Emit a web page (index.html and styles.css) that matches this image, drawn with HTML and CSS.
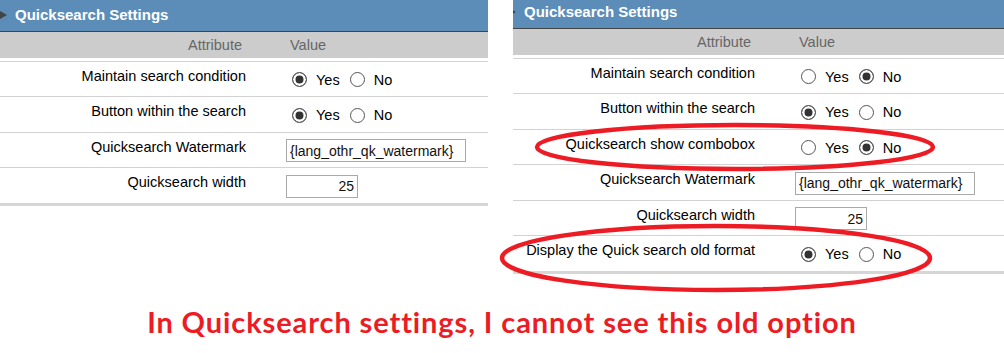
FILE: index.html
```html
<!DOCTYPE html>
<html lang="en">
<head>
    <meta charset="UTF-8">
    <title>Quicksearch Settings</title>
    <link rel="stylesheet" href="styles.css">
</head>
<body>
    <div class="panels">

        <div class="panel panel-left">
            <div class="sheet">
                <div class="title"><span class="arrow"></span>Quicksearch Settings</div>
                <div class="colhead">
                    <div class="attr">Attribute</div>
                    <div class="val">Value</div>
                </div>
                <div class="rows">
                    <div class="row">
                        <label class="attr">Maintain search condition</label>
                        <div class="val">
                            <input type="radio" name="l1" checked><span>Yes</span>
                            <input type="radio" name="l1"><span>No</span>
                        </div>
                    </div>
                    <div class="row">
                        <label class="attr">Button within the search</label>
                        <div class="val">
                            <input type="radio" name="l2" checked><span>Yes</span>
                            <input type="radio" name="l2"><span>No</span>
                        </div>
                    </div>
                    <div class="row">
                        <label class="attr">Quicksearch Watermark</label>
                        <div class="val">
                            <input type="text" class="watermark" value="{lang_othr_qk_watermark}">
                        </div>
                    </div>
                    <div class="row last">
                        <label class="attr">Quicksearch width</label>
                        <div class="val">
                            <input type="text" class="width" value="25">
                        </div>
                    </div>
                </div>
            </div>
        </div>

        <div class="panel panel-right">
            <div class="sheet">
                <div class="title"><span class="arrow"></span>Quicksearch Settings</div>
                <div class="colhead">
                    <div class="attr">Attribute</div>
                    <div class="val">Value</div>
                </div>
                <div class="rows">
                    <div class="row">
                        <label class="attr">Maintain search condition</label>
                        <div class="val">
                            <input type="radio" name="r1"><span>Yes</span>
                            <input type="radio" name="r1" checked><span>No</span>
                        </div>
                    </div>
                    <div class="row">
                        <label class="attr">Button within the search</label>
                        <div class="val">
                            <input type="radio" name="r2" checked><span>Yes</span>
                            <input type="radio" name="r2"><span>No</span>
                        </div>
                    </div>
                    <div class="row">
                        <label class="attr">Quicksearch show combobox</label>
                        <div class="val">
                            <input type="radio" name="r3"><span>Yes</span>
                            <input type="radio" name="r3" checked><span>No</span>
                        </div>
                    </div>
                    <div class="row">
                        <label class="attr">Quicksearch Watermark</label>
                        <div class="val">
                            <input type="text" class="watermark" value="{lang_othr_qk_watermark}">
                        </div>
                    </div>
                    <div class="row">
                        <label class="attr">Quicksearch width</label>
                        <div class="val">
                            <input type="text" class="width" value="25">
                        </div>
                    </div>
                    <div class="row last">
                        <label class="attr">Display the Quick search old format</label>
                        <div class="val">
                            <input type="radio" name="r6" checked><span>Yes</span>
                            <input type="radio" name="r6"><span>No</span>
                        </div>
                    </div>
                </div>
            </div>
        </div>

    </div>

    <p class="caption">In Quicksearch settings, I cannot see this old option</p>

    <!-- hand drawn marks over the screenshot -->
    <svg class="marks" width="1004" height="353" viewBox="0 0 1004 353">
        <ellipse cx="735" cy="147" rx="198" ry="22" />
        <ellipse cx="716" cy="258" rx="214" ry="32" />
    </svg>
</body>
</html>
```

FILE: styles.css
```css
body {
    margin: 0;
    background-color: #fff;
    color: #000;
    font-family: 'Liberation Sans', Arial, sans-serif;
    font-size: 14.5px;
    position: relative;
    width: 1004px;
    height: 353px;
    overflow: hidden;
}
.panels {
    display: flex;
    gap: 25px;
    align-items: flex-start;
}
.panel {
    overflow: hidden;
}
.panel-left {
    width: 488px;
}
.panel-right {
    flex: 1;
}
.panel-right .sheet {
    margin-top: -3px;
    margin-left: -4px;
}
.title {
    height: 31px;
    background-color: #5b8db8;
    border-bottom: 1px solid #444;
    color: #fff;
    font-weight: bold;
    font-size: 15px;
    line-height: 29px;
    padding-left: 15px;
    position: relative;
}
.arrow {
    position: absolute;
    left: 0;
    top: 11px;
    border-left: 7px solid #444;
    border-top: 4px solid transparent;
    border-bottom: 4px solid transparent;
}
.colhead {
    display: flex;
    height: 26px;
    align-items: center;
    background-color: #cccccc;
    color: #666;
    font-size: 14.5px;
}
.colhead .attr {
    width: 242px;
    text-align: right;
}
.colhead .val {
    padding-left: 48px;
}
.rows {
    margin-top: 2.5px;
    border-top: 1px solid #d2d2d2;
}
.row {
    display: flex;
    height: 35.5px;
    box-sizing: border-box;
    border-bottom: 1px solid #d2d2d2;
}
.row.last {
    height: 37.5px;
    border-bottom: 3px solid #d6d6d6;
}
.row .attr {
    width: 246px;
    text-align: right;
    padding-top: 6px;
    white-space: nowrap;
}
.row .val {
    display: flex;
    align-items: center;
    padding-left: 40px;
    padding-top: 2px;
}
input[type="radio"] {
    appearance: none;
    -webkit-appearance: none;
    width: 15px;
    height: 15px;
    margin: 0 9px 0 6px;
    border: 1px solid #555;
    border-radius: 50%;
    background-color: #fff;
    box-sizing: border-box;
}
input[type="radio"]:checked {
    background-color: #333;
    box-shadow: inset 0 0 0 2.5px #fff;
}
.val span + input[type="radio"] {
    margin-left: 10px;
}
input[type="text"] {
    height: 23px;
    box-sizing: border-box;
    border: 1px solid #a9a9a9;
    font-family: 'Liberation Sans', Arial, sans-serif;
    font-size: 14px;
    color: #111;
    padding: 0 3px;
    margin: 0;
}
.watermark {
    width: 180px;
}
.width {
    width: 72px;
    text-align: right;
}
.caption {
    margin: 0;
    position: absolute;
    left: 0;
    right: 0;
    top: 304px;
    text-align: center;
    font-family: Lato, 'Open Sans', sans-serif;
    font-weight: bold;
    font-size: 29px;
    letter-spacing: 0.9px;
    line-height: 35px;
    color: #ed1c24;
}
.marks {
    position: absolute;
    left: 0;
    top: 0;
    pointer-events: none;
}
.marks ellipse {
    fill: none;
    stroke: #ed1c24;
    stroke-width: 4.5;
}
```
